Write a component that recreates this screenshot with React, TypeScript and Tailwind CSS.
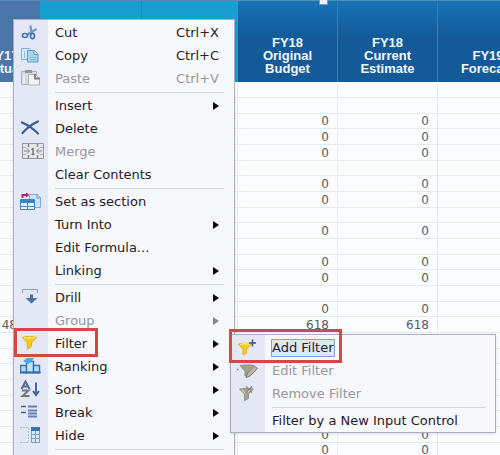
import type { ReactNode } from "react";
import clsx from "clsx";

type MenuEntry = {
  label: string;
  icon?: ReactNode;
  shortcut?: string;
  submenu?: boolean;
  disabled?: boolean;
  selected?: boolean;
};

function Icon({ children }: { children: ReactNode }) {
  return (
    <svg width="24" height="20" viewBox="0 0 24 20" fill="none" aria-hidden="true">
      {children}
    </svg>
  );
}

const cutIcon = (
  <Icon>
    <path d="M10.500 2.500 11.500 11M16.500 6 6.500 12" stroke="#6c9bcb" strokeWidth="2.200" />
    <ellipse cx="5" cy="12.500" rx="2.600" ry="2" stroke="#3a72b4" strokeWidth="1.600" />
    <ellipse cx="12.500" cy="13" rx="2" ry="2.600" stroke="#3a72b4" strokeWidth="1.600" />
  </Icon>
);

const copyIcon = (
  <Icon>
    <path d="M1.500 2.500h8l2 2v9h-10z" fill="#dcebf7" stroke="#7fb0d4" />
    <path d="M4.500 5v7" stroke="#8fbcdc" />
    <path d="M7.500 4.500h7l3.500 3.500v8h-10.500z" fill="#acd3ec" stroke="#5c9cc8" />
    <path d="M14 4.500v4h4" fill="#e8f4fb" stroke="#5c9cc8" />
    <path d="M10 11.500h6M10 13.500h6" stroke="#84bbdf" />
  </Icon>
);

const pasteIcon = (
  <Icon>
    <path d="M1.500 2.500h15v13h-15z" fill="#d9dade" stroke="#b2b3b8" />
    <path d="M5 1h7v3h-7z" fill="#94959b" />
    <path d="M8.500 5.500h7l4 4v6.500h-11z" fill="#f3f3f5" stroke="#b2b3b8" />
    <path d="M4 6v8" stroke="#efeff2" strokeWidth="1.500" />
    <path d="M15 5v4.500h5" stroke="#7d7e85" strokeWidth="1.800" />
  </Icon>
);

const deleteIcon = (
  <Icon>
    <path d="M2 3.500c6 2.500 11 6 16 11M18 2.500C12 5 7 9 2.500 14" stroke="#3d5c94" strokeWidth="2.200" strokeLinecap="round" />
  </Icon>
);

const mergeIcon = (
  <Icon>
    <path d="M2.500 1.500h21v15h-21z" fill="#e6e7ec" stroke="#96989f" />
    <path d="M8.500 2v3M17.500 2v3M8.500 13v3M17.500 13v3" stroke="#85878e" strokeWidth="1.500" />
    <path d="M3 5.500h3M3 12.500h3M20 5.500h3M20 12.500h3" stroke="#b0b2b8" />
    <path d="M4 9h5M17 9h5M7 6.500 9.500 9 7 11.500M19 6.500 16.500 9l2.500 2.500" stroke="#83858c" />
    <path d="M11.500 7.500l1.500-1v6M11.500 12.500h3" stroke="#606269" strokeWidth="1.200" />
  </Icon>
);

const sectionIcon = (
  <Icon>
    <path d="M9.500 2.500h8l3 3v10h-11z" fill="#cfe3f5" stroke="#7daedb" />
    <path d="M17 2.500v3.500h3.500" stroke="#5c94cc" />
    <path d="M.500 7.500h14v10h-14z" fill="#e6f1fb" stroke="#3f82c6" />
    <path d="M1 8h13v3h-13z" fill="#3d83ca" />
    <path d="M1 14.500h13M7.500 11v6" stroke="#4b8bcb" />
    <path d="M2.500 6v-3h4" stroke="#b0246c" strokeWidth="2" />
    <path d="M6 .500 9.500 3 6 5.500z" fill="#b0246c" />
  </Icon>
);

const drillIcon = (
  <Icon>
    <path d="M2.500 5v-3.500h15V5" stroke="#86a2cc" />
    <path d="M10 6.500h3V10h4.500l-6 5.500L5.500 10H10z" fill="#4a70a8" />
  </Icon>
);

const filterIcon = (
  <Icon>
    <path d="M2.500 3.500c4-1.500 10.500-1.500 14 0l-5 5.500v3.500l-4 2.500V9z" fill="#f6cd1c" stroke="#e2ae12" />
    <path d="M4 4.200c4-1 7-1 11 0" stroke="#fbe77c" strokeWidth="1.500" />
  </Icon>
);

const rankingIcon = (
  <Icon>
    <path d="M.500 8.500h6v7h-6z" fill="#b5daf5" stroke="#3474b8" strokeWidth="1.400" />
    <path d="M6.500 4.500h7v11h-7z" fill="#c8e3f8" stroke="#3474b8" strokeWidth="1.400" />
    <path d="M13.500 8.500h6v7h-6z" fill="#b5daf5" stroke="#3474b8" strokeWidth="1.400" />
    <path d="M0 15.500h20.500" stroke="#2f6bb0" strokeWidth="2" />
    <path d="m3 4 4-3h7l-2 3-4 3z" fill="#4fa8e4" />
  </Icon>
);

const sortIcon = (
  <Icon>
    <path d="M1.500 9 5.500 1.500 9.500 9M3 6.500h5" stroke="#526c9b" strokeWidth="2" />
    <path d="M2 10.500h6.500L2.500 16h7" stroke="#7d7970" strokeWidth="2" />
    <path d="M16 2.500v12M13 11l3 4 3-4" stroke="#4268a0" strokeWidth="2" />
  </Icon>
);

const breakIcon = (
  <Icon>
    <path d="M1 3.500h5M1 9.500h5" stroke="#49658f" strokeWidth="1.500" />
    <path d="M8 3.500h9M8 7.500h9M8 10.500h9M8 13.500h9" stroke="#6482b4" strokeWidth="2" />
  </Icon>
);

const hideIcon = (
  <Icon>
    <path d="M0 1.500h8.500v15H0" stroke="#9cc3e6" strokeDasharray="2 1" />
    <path d="M1 5h6M1 8h6M1 11h6M1 14h6" stroke="#d6e8f6" />
    <path d="M11.500 1.500h8v15h-8z" fill="#d9ebf8" stroke="#66a3d6" />
    <path d="M11 1h9v4h-9z" fill="#3a72ae" />
    <path d="M11.500 8.500h8M11.500 12.500h8M15.500 5v11" stroke="#66a3d6" />
  </Icon>
);

const addFilterIcon = (
  <Icon>
    <path d="M1.500 6c4-1 9-1 13 0L9.500 11v4l-3.500 2v-6z" fill="#f6cd1c" stroke="#e2ae12" />
    <path d="M3 6.500c3-.8 7-.8 10 0" stroke="#fbe77c" strokeWidth="1.500" />
    <path d="M15.500 1.500v7M12 5h7" stroke="#44537e" strokeWidth="1.500" />
  </Icon>
);

const editFilterIcon = (
  <Icon>
    <path d="M3 4.500c4-.8 10-.8 14 0L12 9.500v3.500l-4 2v-5z" fill="#a49f92" stroke="#96928a" />
    <path d="m17.500 5 3 2.500-7.500 7.500-4 1.500 1.500-4.500z" fill="#bcb7a8" stroke="#7d796f" />
    <path d="M0 8.500h1.500" stroke="#8f8b80" strokeWidth="1.500" />
  </Icon>
);

const removeFilterIcon = (
  <Icon>
    <path d="M2.500 5c4-.8 10-.8 14 0l-5 5v4.500l-4 2V10z" fill="#a8a396" stroke="#96928a" />
    <path d="m9 2.500 6 6M15 2.500 9 8.500" stroke="#8c887e" strokeWidth="1.500" />
    <path d="m5 6 3 3M11 8l2-2" stroke="#dbd8cf" />
  </Icon>
);

const menuGroups: MenuEntry[][] = [
  [
    { label: "Cut", icon: cutIcon, shortcut: "Ctrl+X" },
    { label: "Copy", icon: copyIcon, shortcut: "Ctrl+C" },
    { label: "Paste", icon: pasteIcon, shortcut: "Ctrl+V", disabled: true },
  ],
  [
    { label: "Insert", submenu: true },
    { label: "Delete", icon: deleteIcon },
    { label: "Merge", icon: mergeIcon, disabled: true },
    { label: "Clear Contents" },
  ],
  [
    { label: "Set as section", icon: sectionIcon },
    { label: "Turn Into", submenu: true },
    { label: "Edit Formula..." },
    { label: "Linking", submenu: true },
  ],
  [
    { label: "Drill", icon: drillIcon, submenu: true },
    { label: "Group", submenu: true, disabled: true },
    { label: "Filter", icon: filterIcon, submenu: true },
    { label: "Ranking", icon: rankingIcon, submenu: true },
    { label: "Sort", icon: sortIcon, submenu: true },
    { label: "Break", icon: breakIcon, submenu: true },
    { label: "Hide", icon: hideIcon, submenu: true },
  ],
  [],
];

const filterGroups: MenuEntry[][] = [
  [
    { label: "Add Filter", icon: addFilterIcon, selected: true },
    { label: "Edit Filter", icon: editFilterIcon, disabled: true },
    { label: "Remove Filter", icon: removeFilterIcon, disabled: true },
  ],
  [{ label: "Filter by a New Input Control" }],
];

const columns = [
  { lines: ["FY17", "Actual"], className: "bg-[#4a76aa]" },
  { lines: [], className: "bg-[#189fd1] border-r border-[#1590bf]" },
  { lines: [], className: "bg-[#189fd1]" },
  { lines: ["FY18", "Original", "Budget"], className: "bg-linear-to-b from-[#1673b8] to-[#145a98] to-45% border-r border-[#3a7db5]" },
  { lines: ["FY18", "Current", "Estimate"], className: "bg-linear-to-b from-[#1673b8] to-[#145a98] to-45% border-r border-[#3a7db5]" },
  { lines: ["FY19", "Forecast"], className: "bg-linear-to-b from-[#1673b8] to-[#145a98] to-45%" },
];

// value shown in both FY18 columns, one entry per sheet row
const values = [
  "", "", "0", "0", "0", "", "0", "0", "", "0", "", "0", "0", "", "0", "618",
  "", "", "", "", "", "", "0", "0",
];

function MenuRow({ entry }: { entry: MenuEntry }) {
  return (
    <li>
      <button
        type="button"
        disabled={entry.disabled}
        className={clsx(
          "flex h-[23px] w-full items-center pr-[15px] text-left",
          entry.disabled ? "text-[#96979c]" : "text-[#1f2024]"
        )}
      >
        <span className="flex w-[34px] shrink-0 pl-1.5">{entry.icon}</span>
        <span
          className={clsx(
            "ml-[7px] leading-4",
            entry.selected && "bg-[#dce8f7] outline outline-[#7fa5da]"
          )}
        >
          {entry.label}
        </span>
        {entry.shortcut && <span className="ml-auto">{entry.shortcut}</span>}
        {entry.submenu && (
          <svg className="ml-auto" width="6" height="8" viewBox="0 0 6 8" aria-hidden="true">
            <path d="M0 0 6 4 0 8z" fill={entry.disabled ? "#85868a" : "#08080a"} />
          </svg>
        )}
      </button>
    </li>
  );
}

function Menu({ groups, className }: { groups: MenuEntry[][]; className: string }) {
  return (
    <div
      className={clsx(
        "absolute border border-[#a9afc0] bg-linear-to-r from-[#e4e7f4] from-[34px] to-[#f7f8fb] to-[34px] pt-px text-[13px] shadow-sm",
        className
      )}
    >
      {groups.map((group, i) => (
        <ul key={i}>
          {i > 0 && (
            <li className="mb-px ml-[41px] mr-2.5 h-[3px] border-b border-[#d3d6dc]" aria-hidden="true" />
          )}
          {group.map((entry) => (
            <MenuRow key={entry.label} entry={entry} />
          ))}
        </ul>
      ))}
    </div>
  );
}

function Sheet() {
  return (
    <table className="-ml-[34px] w-[572px] table-fixed border-separate border-spacing-0">
      <colgroup>
        <col className="w-[74px]" />
        <col className="w-[102px]" />
        <col className="w-24" />
        <col className="w-[100px]" />
        <col className="w-[100px]" />
        <col className="w-[100px]" />
      </colgroup>
      <thead>
        <tr className="h-[82px]">
          {columns.map((col, i) => (
            <th
              key={i}
              className={clsx(
                "border-t border-t-[#4f8fb8] p-0 pb-[7px] text-center align-bottom text-[13px] font-bold leading-[13px] text-[#f1f6fb]",
                col.className
              )}
            >
              {col.lines.map((line) => (
                <span key={line} className="block">
                  {line}
                </span>
              ))}
            </th>
          ))}
        </tr>
      </thead>
      <tbody className="font-['DejaVu_Sans'] text-xs leading-[14px] text-[#5c5a60]">
        {values.map((value, row) => (
          <tr key={row} className="h-4 nth-[3n]:h-[15px]">
            {columns.map((_, i) => (
              <td
                key={i}
                className={clsx(
                  "border-b border-r border-b-[#e6eaec] border-r-[#e9ebef] p-0 text-right",
                  i === 0 ? "pr-[22px]" : "pr-2"
                )}
              >
                {i === 0 && value === "618" && "48"}
                {(i === 3 || i === 4) && value}
              </td>
            ))}
          </tr>
        ))}
      </tbody>
    </table>
  );
}

export default function App() {
  return (
    <main className="relative h-screen overflow-hidden bg-[#fafcfd] font-['Liberation_Sans',sans-serif]">
      <Sheet />
      <span className="absolute left-[319px] top-0 h-[5px] w-[9px] border border-t-0 border-[#7e9cba] bg-[#eef2f6]" />

      <Menu
        groups={menuGroups}
        className="bottom-0 left-[13px] top-[19px] w-[222px] border-b-0 font-['DejaVu_Sans',sans-serif]"
      />
      <Menu
        groups={filterGroups}
        className="left-[230px] top-[334px] w-[266px] font-['DejaVu_Sans',sans-serif]"
      />

      {/* callouts round the two steps */}
      <div className="pointer-events-none absolute left-[14px] top-[328px] h-[29px] w-[84px] border-3 border-[#cf4a45]" />
      <div className="pointer-events-none absolute left-[229px] top-[329px] h-[34px] w-[113px] border-3 border-[#cf4a45]" />
    </main>
  );
}
